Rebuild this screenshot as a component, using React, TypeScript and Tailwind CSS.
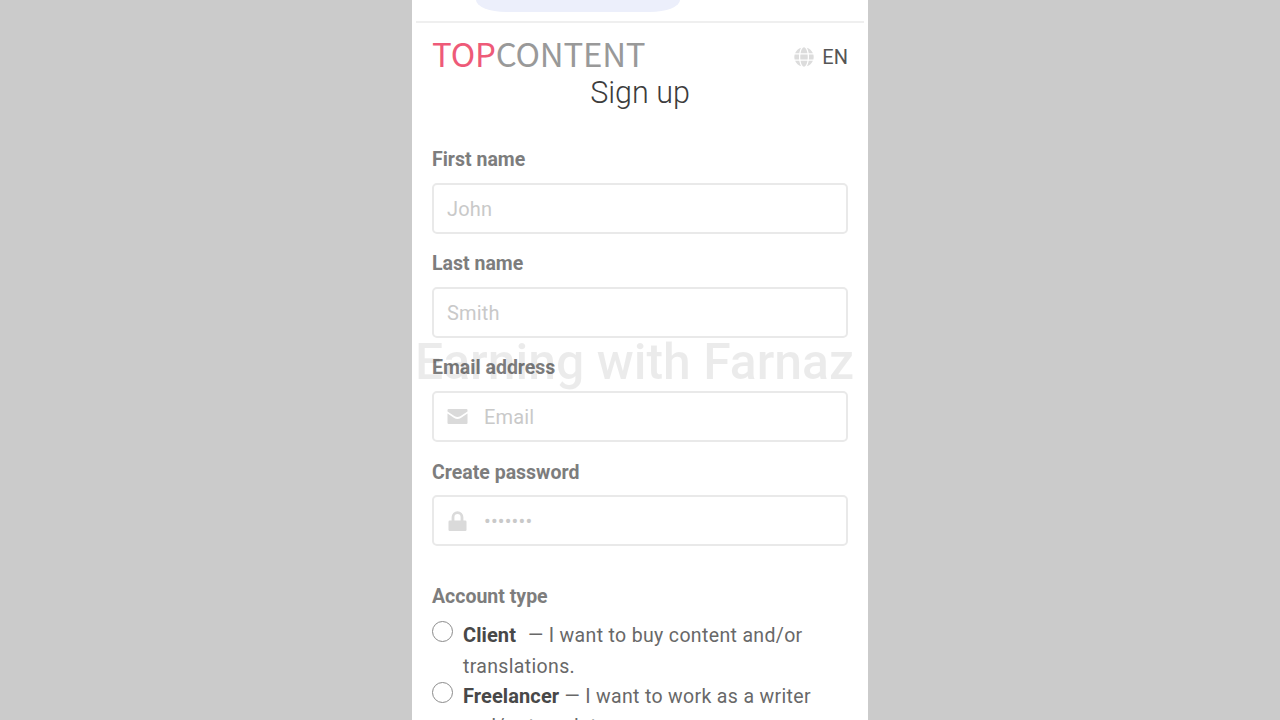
import { ReactNode } from "react";
import { FaGlobe } from "react-icons/fa";

type FieldProps = {
  label: string;
  placeholder: string;
  type?: string;
  icon?: ReactNode;
};

function MailIcon() {
  return (
    <svg viewBox="0 0 21 21" className="h-[21px] w-[21px]" fill="currentColor">
      <path d="M1.5 3h18a1 1 0 0 1 1 1v1.6l-7.2 4.7q-2.8 1.5-5.6 0L.5 5.6V4a1 1 0 0 1 1-1z" />
      <path d="M.5 7.6l6.7 4.5q3.3 1.7 6.6 0l6.7-4.5V17a1 1 0 0 1-1 1h-18a1 1 0 0 1-1-1z" />
    </svg>
  );
}

function LockIcon() {
  return (
    <svg viewBox="0 0 21 21" className="h-[21px] w-[21px]" fill="currentColor">
      <rect x="1.5" y="9.5" width="18" height="10.5" rx="1.2" />
      <path
        d="M6 11V6.2a4.5 4.5 0 0 1 9 0V11"
        fill="none"
        stroke="currentColor"
        strokeWidth="2.8"
      />
    </svg>
  );
}

function Field({ label, placeholder, type = "text", icon }: FieldProps) {
  return (
    <label className="block h-[104.2px]">
      <span className="block h-[35.5px] pt-px text-[19.5px] leading-[24px] font-bold text-[#7d7d7d]">
        {label}
      </span>
      <span className="flex h-[51px] items-center rounded-[5px] border-2 border-[#e9e9e9] px-[13px] pt-px">
        {icon && <span className="w-[37px] text-[#dadada]">{icon}</span>}
        <input
          type={type}
          placeholder={placeholder}
          className="min-w-0 flex-1 bg-transparent text-[20px] leading-[24px] tracking-[0.15px] outline-none placeholder:text-[#c9c9c9]"
        />
      </span>
    </label>
  );
}

function AccountOption({ name, children }: { name: string; children: ReactNode }) {
  return (
    <label className="flex h-[60.6px] text-[19.5px] leading-[30.3px] tracking-[0.34px] text-[#686868]">
      <input
        type="radio"
        name="account"
        className="mt-[1px] mr-[10px] h-[21px] w-[21px] shrink-0 appearance-none rounded-full border-[1.5px] border-[#8b8b8b]"
      />
      <span className="whitespace-nowrap">
        <b className="text-[20px] font-bold tracking-[0.1px] text-[#484848]">{name}</b>
        {children}
      </span>
    </label>
  );
}

export default function App() {
  return (
    <div className="flex h-[720px] justify-center overflow-hidden bg-[#cbcbcb] font-['Roboto',sans-serif]">
      <main className="relative w-[456px] bg-white">
        <div className="mx-1 h-[23px] border-b-2 border-[#efefef]">
          <div className="ml-[60px] h-[12px] w-[204px] rounded-b-[30px_12px] bg-[#eceffb]" />
        </div>

        <div className="px-5">
          <header className="flex h-[54px] items-start justify-between pt-[10px]">
            <div className="font-['Noto_Sans_CJK_SC',sans-serif] text-[33px] leading-[40px] tracking-[-0.2px] text-[#999999]">
              <span className="text-[#ee5a78]">TOP</span>CONTENT
            </div>
            <div className="mt-[9px] flex items-center gap-2 text-[20px] leading-[30px] text-[#555555]">
              <FaGlobe className="h-[20px] w-[20px] text-[#dcdcdc]" />
              EN
            </div>
          </header>
          <h1 className="h-[70px] text-center text-[30.5px] leading-[32px] font-light text-[#3c3c3c]">
            Sign up
          </h1>

          <form>
            <Field label="First name" placeholder="John" />
            <Field label="Last name" placeholder="Smith" />
            <Field label="Email address" placeholder="Email" icon={<MailIcon />} />
            <Field
              label="Create password"
              placeholder="•••••••"
              type="password"
              icon={<LockIcon />}
            />
            <div className="mt-5 h-[36.5px] pt-px text-[19.5px] leading-[24px] font-bold text-[#7d7d7d]">
              Account type
            </div>
            <AccountOption name="Client">
              <span className="ml-3">— I want to buy content and/or</span>
              <br />
              translations.
            </AccountOption>
            <AccountOption name="Freelancer">
              {" — I want to work as a writer"}
              <br />
              and/or translator.
            </AccountOption>
          </form>
        </div>

        <div className="pointer-events-none absolute top-[334px] left-[3px] text-[49.9px] leading-[56px] font-medium whitespace-nowrap text-black/8">
          Earning with Farnaz
        </div>
      </main>
    </div>
  );
}
